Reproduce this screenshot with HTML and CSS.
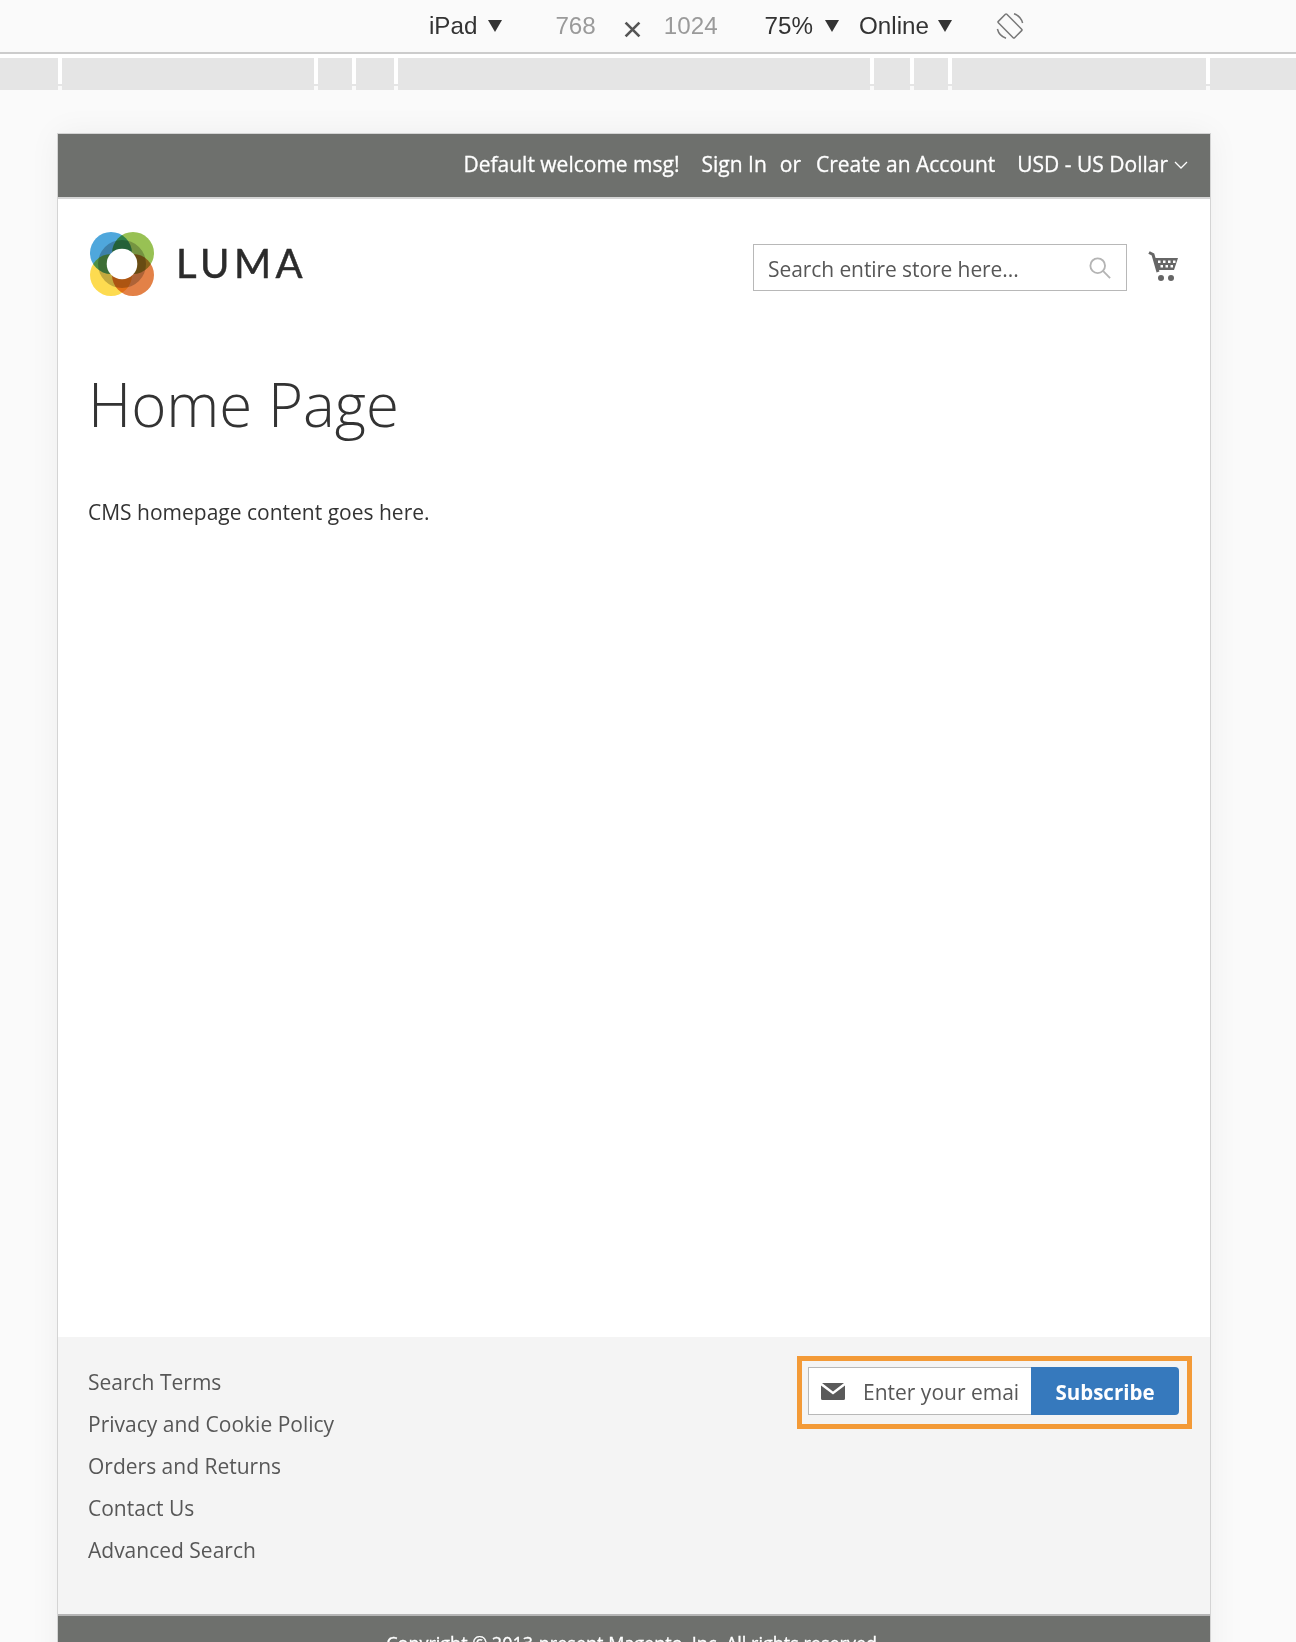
FILE: index.html
```html
<!DOCTYPE html>
<html lang="en">
<head>
<meta charset="utf-8">
<title>Home Page</title>
<link rel="stylesheet" href="styles.css">
</head>
<body>
<div class="devbar">
  <span class="dev dev-ipad">iPad</span><i class="tri tri-ipad"></i>
  <span class="dev dim dev-w">768</span>
  <svg class="times" viewBox="0 0 16 16"><path d="M1.5 1.5L14.500 14.500M14.500 1.500L1.500 14.500"/></svg>
  <span class="dev dim">1024</span>
  <span class="dev dev-zoom">75%</span><i class="tri tri-zoom"></i>
  <span class="dev dev-net">Online</span><i class="tri tri-net"></i>
  <svg class="rotate" viewBox="0 0 28 28"><rect x="8" y="2.500" width="12" height="23" rx="1" transform="rotate(-45 14 14)"/><path d="M18 1.800A13 13 0 0 1 26.600 11M10 26.200A13 13 0 0 1 1.400 17"/></svg>
</div>
<div class="ruler">
  <i class="seg s1"></i><i class="seg s2"></i><i class="seg s3"></i><i class="seg s4"></i><i class="seg s5"></i><i class="seg s6"></i><i class="seg s7"></i><i class="seg s8"></i><i class="seg s9"></i>
</div>
<div class="frame">
  <div class="topbar">
    <span class="t1">Default welcome msg!</span>
    <span class="t2">Sign In</span>
    <span class="t3">or</span>
    <span class="t4">Create an Account</span>
    <span class="t5">USD - US Dollar</span>
    <svg class="caret" viewBox="0 0 14 8"><path d="M1 1l6 6 6-6"/></svg>
  </div>
  <header class="head">
    <div class="logo">
      <svg class="logomark" viewBox="0 0 64 64">
        <g class="mix">
          <circle class="c" cx="21" cy="21" r="21" fill="#4fa7dc"/>
          <circle class="c" cx="43" cy="21" r="21" fill="#98c154"/>
          <circle class="c" cx="21" cy="43" r="21" fill="#fddb50"/>
          <circle class="c" cx="43" cy="43" r="21" fill="#e38147"/>
          <circle class="c" cx="32" cy="32" r="24" fill="#c4c4c4"/>
        </g>
        <circle cx="32" cy="32" r="15.300" fill="#fff"/>
      </svg>
      <span class="wordmark">LUMA</span>
    </div>
    <div class="search">
      <span class="search-ph">Search entire store here...</span>
      <svg class="search-ic" viewBox="0 0 24 24"><circle cx="9.500" cy="9.500" r="8"/><path d="M15.500 15.500L23 23"/></svg>
    </div>
    <svg class="cart" viewBox="0 0 32 32"><path class="cart-handle" d="M2 2.500L6 4.500 11 22"/><path fill-rule="evenodd" d="M7 8H31L27 20H11ZM11 10.500v2.500h2.500v-2.500ZM16 10.500v2.500h2.500v-2.500ZM21 10.500v2.500h2.500v-2.500ZM26 10.500v2.500h2.500v-2.500ZM13.500 15v2.500h2.500V15ZM18.500 15v2.500H21V15ZM23.500 15v2.500H26V15Z"/><circle cx="14" cy="28" r="3"/><circle cx="24" cy="28" r="3"/></svg>
  </header>
  <main class="main">
    <h1 class="title">Home Page</h1>
    <p class="cms">CMS homepage content goes here.</p>
  </main>
  <footer class="foot">
    <ul class="links">
      <li>Search Terms</li>
      <li>Privacy and Cookie Policy</li>
      <li>Orders and Returns</li>
      <li>Contact Us</li>
      <li>Advanced Search</li>
    </ul>
    <div class="news">
      <div class="email">
        <svg class="mail" viewBox="0 0 24 17"><path d="M1 0H23L12 8.500ZM0 2.500L12 11.500 24 2.500V15.500A1.500 1.500 0 0 1 22.500 17H1.500A1.500 1.500 0 0 1 0 15.500Z"/></svg>
        <span class="email-ph">Enter your emai</span>
      </div>
      <div class="sub">Subscribe</div>
    </div>
  </footer>
  <div class="copy">Copyright © 2013-present Magento, Inc. All rights reserved.</div>
</div>
</body>
</html>
```
FILE: styles.css
```css
* { box-sizing: border-box; }
html, body { margin: 0; padding: 0; height: 1642px; overflow: hidden; }
body { background: #fafafa; font-family: "Open Sans", sans-serif; color: #333; }

.devbar { height: 52px; display: flex; align-items: center; padding-left: 429px; font-family: "Liberation Sans", Arial, sans-serif; font-size: 24.2px; color: #333; }
.dev { line-height: 52px; }
.dim { color: #9a9a9a; }
.tri { display: block; width: 0; height: 0; border-left: 7.5px solid transparent; border-right: 7.5px solid transparent; border-top: 12px solid #333; margin-top: -1px; }
.tri-ipad { margin-left: 11px; }
.dev-w { margin-left: 53px; }
.times { width: 17px; height: 17px; margin: 6px 23px 0 28px; fill: none; stroke: #555; stroke-width: 2.500; }
.dev-zoom { margin-left: 47px; }
.tri-zoom { margin-left: 12px; }
.dev-net { margin-left: 20px; }
.tri-net { margin-left: 9px; }
.rotate { width: 28px; height: 28px; margin-left: 44px; fill: none; stroke: #777; stroke-width: 1.500; }

.ruler { height: 38px; border-top: 2px solid #ccc; padding-top: 4px; display: flex; gap: 4px; background: linear-gradient(#fff 0 30px, #e5e5e5 30px 32px, #fafafa 32px); }
.seg { display: block; height: 32px; background: #e5e5e5; }
.s1 { width: 58px; } .s2 { width: 252px; } .s3 { width: 34px; } .s4 { width: 38px; } .s5 { width: 472px; } .s6 { width: 36px; } .s7 { width: 34px; } .s8 { width: 254px; } .s9 { flex: 1; }

.frame { width: 1154px; margin: 43px 0 0 57px; border: 1px solid #d4d4d4; border-bottom: 0; background: #fff; box-shadow: 0 0 30px rgba(0,0,0,.05); }
.topbar { height: 65px; background: #6e706d; border-bottom: 2px solid #d6d6d6; color: #fff; font-size: 21px; -webkit-text-stroke: .3px #fff; display: flex; align-items: center; justify-content: flex-end; padding: 0 22px 4px 0; white-space: nowrap; }
.t2 { margin-left: 22px; }
.t3 { margin-left: 13px; }
.t4 { margin-left: 15px; }
.t5 { margin-left: 22px; }
.caret { width: 14px; height: 8px; margin: 2px 0 0 6px; fill: none; stroke: #fff; stroke-width: 1.300; }

.head { height: 118px; display: flex; align-items: flex-start; padding: 33px 31px 0 32px; }
.logo { display: flex; align-items: flex-start; }
.logomark { width: 64px; height: 64px; display: block; }
.mix { isolation: isolate; }
.c { mix-blend-mode: multiply; }
.wordmark { font-family: Lato, sans-serif; font-weight: 400; font-size: 40px; letter-spacing: 4.500px; color: #2b2b2b; -webkit-text-stroke: .5px #2b2b2b; margin: -1px 0 0 22px; line-height: 64px; }
.search { width: 374px; height: 47px; margin: 12px 0 0 auto; border: 1px solid #b8b8b8; display: flex; align-items: center; padding: 2px 15px 0 14px; background: #fff; }
.search-ph { font-size: 21px; letter-spacing: -.08px; color: #575757; flex: 1; white-space: nowrap; }
.search-ic { width: 22px; height: 22px; fill: none; stroke: #b4b4b4; stroke-width: 2; margin-top: -2px; }
.cart { width: 32px; height: 32px; margin: 18px 0 0 20px; fill: #666; flex: none; }
.cart-handle { fill: none; stroke: #666; stroke-width: 3; }

.main { height: 1020px; padding: 0 30px; }
.title { margin: 0; padding: 48px 0 0; font-weight: 300; font-size: 60px; line-height: 78px; color: #333; }
.cms { margin: 54px 0 0; font-size: 21px; line-height: 30px; color: #333; }

.foot { height: 279px; background: #f4f4f4; display: flex; justify-content: space-between; padding: 24px 18px 0 30px; border-bottom: 2px solid #b5b5b5; align-items: flex-start; }
.links { list-style: none; margin: 0; padding: 0; font-size: 21px; line-height: 42px; color: #575757; }
.news { display: flex; border: 5px solid #f39a37; padding: 6px; width: 395px; height: 73px; margin-top: -5px; }
.email { width: 223px; height: 48px; background: #fff; border: 1px solid #b8b8b8; border-right: 0; display: flex; align-items: center; padding: 1px 0 0 12px; white-space: nowrap; overflow: hidden; }
.mail { width: 24px; height: 17px; fill: #5a5a5a; flex: none; }
.email-ph { font-size: 21px; color: #575757; margin-left: 18px; }
.sub { width: 148px; height: 48px; background: #3679bd; color: #fff; font-weight: 700; font-size: 20.500px; display: flex; align-items: center; justify-content: center; padding-top: 1px; border-radius: 0 4px 4px 0; }
.copy { height: 80px; background: #6e706d; color: #fff; font-size: 18px; -webkit-text-stroke: .3px #fff; text-align: center; padding-top: 15px; }
```
